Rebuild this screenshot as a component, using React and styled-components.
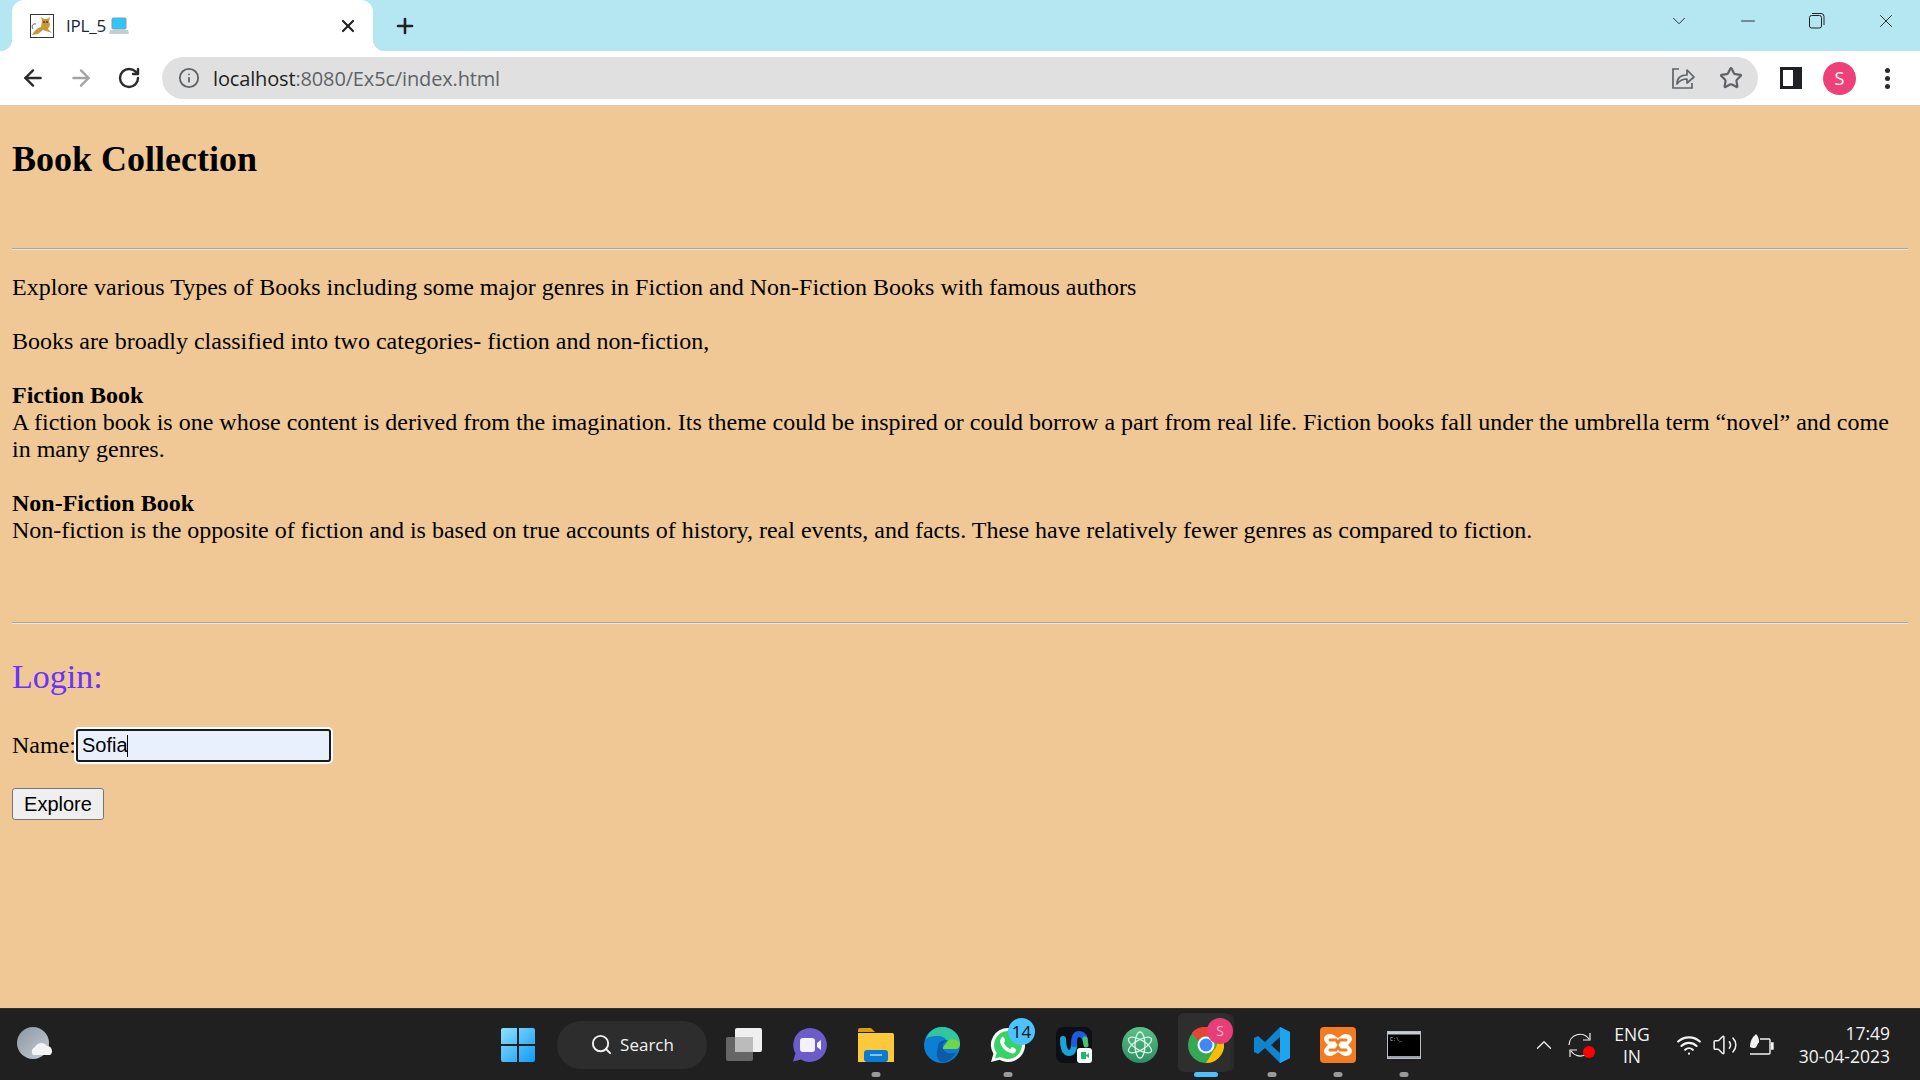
import React from 'react';
import styled, { createGlobalStyle } from 'styled-components';
import { ArrowLeft, ArrowRight, RotateCw, Info, Star, X, Plus, Minus, ChevronDown, ChevronUp, Search, Wifi, Volume2 } from 'lucide-react';

const GlobalStyle = createGlobalStyle`
  html, body {
    margin: 0;
    padding: 0;
    height: 100%;
    overflow: hidden;
  }
  #root {
    height: 100%;
  }
`;

const Screen = styled.div`
  height: 1080px;
  display: flex;
  flex-direction: column;
  background: #f0c896;
`;

/* ---- tab strip ---- */
const TabStrip = styled.div`
  height: 51px;
  flex: none;
  background: #b5e7f3;
  display: flex;
  align-items: flex-end;
  padding-left: 12px;
`;

const Tab = styled.div`
  position: relative;
  width: 361px;
  height: 51px;
  box-sizing: border-box;
  background: #fff;
  border-radius: 12px 12px 0 0;
  display: flex;
  align-items: center;
  padding: 0 15px 0 18px;

  &::before,
  &::after {
    content: '';
    position: absolute;
    bottom: 0;
    width: 12px;
    height: 12px;
  }
  &::before {
    left: -12px;
    background: radial-gradient(circle at 0 0, transparent 12px, #fff 12.5px);
  }
  &::after {
    right: -12px;
    background: radial-gradient(circle at 100% 0, transparent 12px, #fff 12.5px);
  }
`;

const Favicon = styled.svg`
  width: 24px;
  height: 24px;
  flex: none;
  margin-right: 12px;
`;

const TabTitle = styled.span`
  font: 17px 'Open Sans', sans-serif;
  color: #16243c;
  letter-spacing: -0.2px;
`;

const TabClose = styled.span`
  margin-left: auto;
  display: flex;
  color: #222;
`;

const NewTab = styled.span`
  display: flex;
  align-self: center;
  margin-left: 20px;
  color: #222;
`;

const WindowControls = styled.div`
  margin-left: auto;
  align-self: flex-start;
  display: flex;
  height: 42px;
  align-items: center;
`;

const WindowButton = styled.span`
  width: 69px;
  display: flex;
  justify-content: center;
  color: #222;
`;

/* ---- address bar ---- */
const Toolbar = styled.div`
  height: 54px;
  flex: none;
  background: #fff;
  border-bottom: 1px solid #cfcfcf;
  display: flex;
  align-items: center;
  padding-left: 9px;
`;

const NavButton = styled.span`
  width: 48px;
  display: flex;
  justify-content: center;
  color: ${(p) => (p.$off ? '#a3a3a3' : '#2b2b2b')};
`;

const Omnibox = styled.div`
  width: 1596px;
  height: 42px;
  margin-left: 9px;
  background: #e0e0e0;
  border-radius: 21px;
  display: flex;
  align-items: center;
  padding: 0 15px 0 16px;
  box-sizing: border-box;
  color: #5f6368;
`;

const UrlText = styled.span`
  margin-left: 13px;
  font: 20px 'Open Sans', sans-serif;
  letter-spacing: -0.15px;
  color: #5f6368;
  b {
    font-weight: 400;
    color: #1f1f1f;
  }
`;

const BoxActions = styled.div`
  margin-left: auto;
  display: flex;
  gap: 24px;
  align-items: center;
  color: #5f6368;
`;

const ToolIcons = styled.div`
  display: flex;
  align-items: center;
  margin-left: 22px;
  gap: 21px;
`;

const Avatar = styled.span`
  width: 33px;
  height: 33px;
  border-radius: 50%;
  background: #ee4079;
  color: #fff;
  font: 18px 'Open Sans', sans-serif;
  display: flex;
  align-items: center;
  justify-content: center;
`;

const Dots = styled.span`
  display: flex;
  flex-direction: column;
  gap: 3px;
  margin-left: 8px;
  i {
    width: 5px;
    height: 5px;
    border-radius: 50%;
    background: #2b2b2b;
  }
`;

/* ---- page ---- */
const Page = styled.main`
  flex: 1;
  min-height: 0;
  padding: 0 12px;
  background: #f0c896;
  color: #000;
  font: 24px/27px 'Liberation Serif', 'Times New Roman', serif;
`;

const Title = styled.h1`
  margin: 32px 0 69px;
  font-size: 36px;
  line-height: 42px;
  font-weight: 700;
  margin-bottom: 68px;
`;

const Rule = styled.hr`
  margin: 0;
  height: 0;
  border: 0;
  border-top: 1px solid #a3a7ab;
  border-bottom: 1px solid #f4e6d4;
`;

const Para = styled.p`
  margin: 0 0 27px;
  &:first-of-type {
    margin-top: 24px;
  }
  &:last-of-type {
    margin-bottom: 78px;
  }
`;

const Login = styled.h3`
  margin: 34px 0 32px;
  font-size: 34px;
  line-height: 38px;
  font-weight: 400;
  color: #6633ff;
`;

const NameRow = styled.label`
  display: flex;
  align-items: center;
`;

const InputWrap = styled.span`
  position: relative;
  display: flex;
  margin-left: -1px;
`;

const NameInput = styled.input`
  width: 257px;
  height: 35px;
  box-sizing: border-box;
  padding: 0 4px;
  border: 3px solid #1a1a1a;
  border-radius: 4px;
  outline: 2px solid #fff;
  outline-offset: -1px;
  background: #e8f0fe;
  font: 20px 'Liberation Sans', Arial, sans-serif;
  color: #000;
`;

const Caret = styled.i`
  position: absolute;
  left: 52px;
  top: 7px;
  width: 1px;
  height: 22px;
  background: #000;
`;

const Submit = styled.button`
  display: block;
  width: 92px;
  height: 32px;
  margin-top: 25px;
  padding: 0;
  box-sizing: border-box;
  background: #efefef;
  border: 1px solid #767676;
  border-radius: 3px;
  font: 20px 'Liberation Sans', Arial, sans-serif;
  color: #000;
`;

/* ---- taskbar ---- */
const Taskbar = styled.footer`
  height: 71px;
  flex: none;
  background: #202020;
  border-top: 1px solid #2c332c;
  display: flex;
  align-items: center;
`;

const Weather = styled.svg`
  width: 36px;
  height: 36px;
  margin-left: 17px;
  flex: none;
`;

const Center = styled.div`
  margin-left: 432px;
  display: flex;
  align-items: center;
  height: 100%;
`;

const AppSlot = styled.span`
  position: relative;
  width: 66px;
  height: 100%;
  display: flex;
  align-items: center;
  justify-content: center;
  flex: none;
  ${(p) =>
    p.$active &&
    `
    &::before {
      content: '';
      position: absolute;
      left: 5px;
      top: 4px;
      width: 52px;
      height: 59px;
      background: #2e2e2e;
      border-radius: 6px;
      box-shadow: 5px 0 0 -1px #2a2a2a;
    }
    & > svg { position: relative; }
  `}
`;

const RunDot = styled.i`
  position: absolute;
  bottom: 3px;
  left: 50%;
  transform: translateX(-50%);
  width: ${(p) => (p.$active ? 24 : 9)}px;
  height: 5px;
  border-radius: 3px;
  background: ${(p) => (p.$active ? '#4cc2ff' : '#9a9a9a')};
`;

const CountBadge = styled.span`
  position: absolute;
  top: 9px;
  right: 6px;
  width: 27px;
  height: 27px;
  border-radius: 50%;
  background: #4cc2ff;
  color: #111;
  font: 17px/27px 'Open Sans', sans-serif;
  text-align: center;
`;

const ProfileBadge = styled.span`
  position: absolute;
  top: 9px;
  right: 6px;
  width: 26px;
  height: 26px;
  border-radius: 50%;
  background: #e83e78;
  color: #f7b6cc;
  font: 14px/26px 'Open Sans', sans-serif;
  text-align: center;
`;

const SearchPill = styled.div`
  width: 150px;
  height: 48px;
  margin-left: 6px;
  margin-right: 4px;
  border-radius: 24px;
  background: #2d2d2d;
  color: #f2f2f2;
  display: flex;
  align-items: center;
  justify-content: center;
  gap: 7px;
  font: 17px 'Open Sans', sans-serif;
  flex: none;
`;

const Tray = styled.div`
  margin-left: auto;
  display: flex;
  align-items: center;
  color: #f2f2f2;
  height: 100%;
`;

const TrayIcon = styled.span`
  position: relative;
  display: flex;
  justify-content: center;
  width: 36px;
`;

const RedDot = styled.i`
  position: absolute;
  right: 3px;
  bottom: 0;
  width: 12px;
  height: 12px;
  border-radius: 50%;
  background: #f00;
`;

const Lang = styled.div`
  width: 60px;
  margin: 0 9px 0 4px;
  text-align: center;
  font: 17.5px/22px 'Open Sans', sans-serif;
`;

const Clock = styled.div`
  width: 105px;
  margin: 0 30px 0 6px;
  text-align: right;
  font: 17.5px/23px 'Open Sans', sans-serif;
`;

const TomcatIcon = () => (
  <Favicon viewBox="0 0 24 24">
    <rect x="0.5" y="0.5" width="23" height="23" fill="#fff" stroke="#333" />
    <path d="M2 21c2-4 5-7 9-8l1-6-1-4 3 2h3l3-2-1 4 1 4-2 4 4 4-6-2-3-1-5 4z" fill="#c8983a" />
    <path d="M3 15c-2-3 0-6 3-5" fill="none" stroke="#666" />
    <circle cx="14" cy="8" r="1" fill="#5b3d10" />
    <circle cx="17" cy="8" r="1" fill="#5b3d10" />
  </Favicon>
);

const LaptopIcon = () => (
  <svg width="20" height="20" viewBox="0 0 20 20" style={{ marginLeft: 3 }}>
    <rect x="3" y="2" width="14" height="11" rx="1" fill="#2ec5fb" stroke="#8a9aa5" />
    <path d="M1 14h18l1 4H0z" fill="#c7ccd1" />
  </svg>
);

const ShareIcon = () => (
  <svg width="24" height="24" viewBox="0 0 24 24" fill="none" stroke="currentColor" strokeWidth="1.7">
    <path d="M8 3H2v19h19v-5" />
    <path d="M6 18c0-6 4-9 10-9V4l7 7-7 6v-4c-4 0-7 1-10 5z" strokeLinejoin="round" />
  </svg>
);

const SidePanelIcon = () => (
  <svg width="22" height="22" viewBox="0 0 22 22">
    <rect x="1.5" y="1.5" width="19" height="19" fill="none" stroke="#202124" strokeWidth="3" />
    <rect x="13" y="2" width="8" height="18" fill="#202124" />
  </svg>
);

const RestoreIcon = () => (
  <svg width="16" height="16" viewBox="0 0 16 16" fill="none" stroke="currentColor" strokeWidth="1">
    <rect x="0.5" y="2.5" width="12" height="12.5" rx="2" />
    <path d="M3 .5h9a3 3 0 0 1 3 3V12" />
  </svg>
);

const WinLogo = () => (
  <svg width="36" height="36" viewBox="0 0 36 36">
    <defs>
      <linearGradient id="win" x1="0" y1="0" x2="1" y2="1">
        <stop offset="0" stopColor="#8fe0ff" />
        <stop offset="1" stopColor="#0f9bf5" />
      </linearGradient>
    </defs>
    <path d="M1 3a2 2 0 0 1 2-2h14v16H1zM19 1h14a2 2 0 0 1 2 2v14H19zM1 19h16v16H3a2 2 0 0 1-2-2zM19 19h16v14a2 2 0 0 1-2 2H19z" fill="url(#win)" />
  </svg>
);

const TaskViewIcon = () => (
  <svg width="36" height="34" viewBox="0 0 36 34">
    <rect x="0" y="9" width="27" height="24" rx="2" fill="#666" />
    <rect x="9" y="0" width="27" height="24" rx="2" fill="#efefef" />
    <rect x="9" y="9" width="18" height="15" fill="#bbb" />
  </svg>
);

const ChatIcon = () => (
  <svg width="36" height="36" viewBox="0 0 36 36">
    <path d="M18 1a17 17 0 1 1-9 31.5L1 34.5l2.5-8A17 17 0 0 1 18 1z" fill="#6b5cc9" />
    <rect x="8" y="11" width="15" height="14" rx="3" fill="#f4f2ff" />
    <path d="M25 16l4-3v10l-4-3z" fill="#f4f2ff" />
  </svg>
);

const FolderIcon = () => (
  <svg width="36" height="34" viewBox="0 0 36 34">
    <path d="M0 2a2 2 0 0 1 2-2h11l4 4h-17z" fill="#d99e10" />
    <path d="M0 5h34a2 2 0 0 1 2 2v27H0z" fill="#fdc83c" />
    <rect x="6" y="22" width="24" height="12" rx="3" fill="#0b7bd0" />
    <rect x="12" y="26" width="12" height="2" fill="#7cc4f5" />
  </svg>
);

const EdgeIcon = () => (
  <svg width="36" height="36" viewBox="0 0 36 36">
    <circle cx="18" cy="18" r="18" fill="#0c7fd2" />
    <path d="M2 12C5 4 11 0 18 0c10 0 18 7 18 16 0 3-1 5-4 6H19c0-4 4-5 4-8-1-3-5-5-9-5S5 9 2 12z" fill="#2fc6a0" />
    <path d="M36 16c0 3-1 6-4 6H19c0-4 4-5 4-8 5-3 10-2 13 2z" fill="#6fd64a" />
    <path d="M14 20c0-5 5-8 11-6-6 0-7 4-6 8 1 3 7 6 13 3-3 7-9 11-15 10-5-3-5-10-3-15z" fill="#0c5aa8" />
  </svg>
);

const WhatsappIcon = () => (
  <svg width="36" height="36" viewBox="0 0 36 36">
    <path d="M18 1a17 17 0 1 1-8.5 31.7L1 35l2.4-8.3A17 17 0 0 1 18 1z" fill="#fff" />
    <path d="M18 4a14 14 0 1 1-7.3 26L5 31.5l1.6-5.6A14 14 0 0 1 18 4z" fill="#37d366" />
    <path d="M12 10c2-1 3 3 3 4s-1 1-1 2c1 3 4 5 6 6 1 0 1-2 2-2s4 2 4 3c0 3-3 4-5 3-5-1-10-6-11-11 0-2 1-4 2-5z" fill="#fff" />
  </svg>
);

const WebexIcon = () => (
  <svg width="36" height="36" viewBox="0 0 36 36">
    <rect width="36" height="36" rx="7" fill="#0e0f12" />
    <path d="M7 12c0 8 2 14 6 14s5-4 5-9" fill="none" stroke="#1aa3d9" strokeWidth="6" strokeLinecap="round" />
    <path d="M18 17c0-6 1-10 5-10 3 0 5 2 6 5" fill="none" stroke="#1d5be0" strokeWidth="6" strokeLinecap="round" />
    <path d="M29 12l1 6" fill="none" stroke="#4cc46c" strokeWidth="5" strokeLinecap="round" />
    <rect x="21" y="21" width="15" height="15" rx="3" fill="#fff" />
    <path d="M25 25h5v7h-5zM30 28l3-2v5l-3-2z" fill="#22b573" />
  </svg>
);

const AtomIcon = () => (
  <svg width="36" height="36" viewBox="0 0 36 36" fill="none" stroke="#d9f5e3" strokeWidth="1.3">
    <defs>
      <linearGradient id="atom" x1="0" y1="0" x2="0" y2="1">
        <stop offset="0" stopColor="#5cc08a" />
        <stop offset="1" stopColor="#2a8f62" />
      </linearGradient>
    </defs>
    <circle cx="18" cy="18" r="18" fill="url(#atom)" stroke="none" />
    <ellipse cx="18" cy="18" rx="13" ry="5" transform="rotate(30 18 18)" />
    <ellipse cx="18" cy="18" rx="13" ry="5" transform="rotate(-30 18 18)" />
    <ellipse cx="18" cy="18" rx="13" ry="5" transform="rotate(90 18 18)" />
  </svg>
);

const ChromeIcon = () => (
  <svg width="36" height="36" viewBox="0 0 36 36">
    <circle cx="18" cy="18" r="18" fill="#34a853" />
    <path d="M18 0a18 18 0 0 1 15.6 9H18a9 9 0 0 0-8 5L4 5.5A18 18 0 0 1 18 0z" fill="#ea4335" />
    <path d="M33.6 9A18 18 0 0 1 18 36l8-13a9 9 0 0 0-1-14z" fill="#fbbc04" />
    <circle cx="18" cy="18" r="8.5" fill="#fff" />
    <circle cx="18" cy="18" r="6.5" fill="#4285f4" />
  </svg>
);

const VscodeIcon = () => (
  <svg width="36" height="36" viewBox="0 0 36 36">
    <path d="M26 0l10 5v26l-10 5L11 21l-7 6-4-2V11l4-2 7 6zM26 10l-9 8 9 8z" fill="#0f84d0" />
    <path d="M26 0l10 5v26l-10 5z" fill="#1fa4f0" />
  </svg>
);

const XamppIcon = () => (
  <svg width="36" height="36" viewBox="0 0 36 36">
    <rect width="36" height="36" rx="4" fill="#f47b20" />
    <path d="M10 7c-4 0-6 3-6 5s2 4 4 6c-2 2-4 4-4 6s2 5 6 5c3 0 5-2 8-4 3 2 5 4 8 4 4 0 6-3 6-5s-2-4-4-6c2-2 4-4 4-6s-2-5-6-5c-3 0-5 2-8 4-3-2-5-4-8-4z" fill="#fff" />
    <path d="M10 13h6l2 3 2-3h6M10 23h6l2-3 2 3h6" fill="none" stroke="#f47b20" strokeWidth="3" strokeLinecap="round" />
  </svg>
);

const TerminalIcon = () => (
  <svg width="34" height="28" viewBox="0 0 34 28">
    <rect x="0.5" y="0.5" width="33" height="27" fill="#000" stroke="#b8bcc4" />
    <rect x="1" y="1" width="32" height="2.5" fill="#c9ccd2" />
    <text x="3" y="10" fontSize="5" fill="#ddd" fontFamily="Liberation Mono">C:\_</text>
    <rect x="1" y="25" width="32" height="2" fill="#9aa0a8" />
  </svg>
);

const WeatherIcon = () => (
  <Weather viewBox="0 0 36 36">
    <defs>
      <linearGradient id="moon" x1="0" y1="0" x2="1" y2="1">
        <stop offset="0" stopColor="#8b96a1" />
        <stop offset="1" stopColor="#c6ced6" />
      </linearGradient>
    </defs>
    <circle cx="16" cy="16" r="16" fill="url(#moon)" />
    <path d="M16 28a5 5 0 0 1 2-8 7 7 0 0 1 12-1 5 5 0 0 1 3 9z" fill="#f1f3f5" />
  </Weather>
);

const SyncIcon = () => (
  <svg width="24" height="26" viewBox="0 0 24 26" fill="none" stroke="currentColor" strokeWidth="1.2">
    <path d="M1 13A11 11 0 0 1 21 7" />
    <path d="M22 1v7h-7" />
    <path d="M17 23A11 11 0 0 1 3 19" />
    <path d="M2 25v-7h7" />
  </svg>
);

const BatteryIcon = () => (
  <svg width="26" height="24" viewBox="0 0 26 24" fill="none" stroke="currentColor" strokeWidth="1.4">
    <path d="M12 6h9a1 1 0 0 1 1 1v13a1 1 0 0 1-1 1H2" />
    <path d="M23 10h2v6h-2" fill="currentColor" />
    <path d="M2 14c0-7 3-10 6-13 3 3 4 8 2 12-2 2-5 3-8 1z" fill="currentColor" stroke="none" />
    <path d="M11 10l-5 10" stroke="#202020" />
  </svg>
);

const App = () => (
  <>
    <GlobalStyle />
    <Screen>
      <TabStrip>
        <Tab>
          <TomcatIcon />
          <TabTitle>IPL_5</TabTitle>
          <LaptopIcon />
          <TabClose><X size={20} strokeWidth={2.6} /></TabClose>
        </Tab>
        <NewTab><Plus size={24} strokeWidth={2.6} /></NewTab>
        <WindowControls>
          <WindowButton><ChevronDown size={22} strokeWidth={1} /></WindowButton>
          <WindowButton><Minus size={22} strokeWidth={1} /></WindowButton>
          <WindowButton><RestoreIcon /></WindowButton>
          <WindowButton><X size={22} strokeWidth={1} /></WindowButton>
        </WindowControls>
      </TabStrip>

      <Toolbar>
        <NavButton><ArrowLeft size={26} strokeWidth={2.2} /></NavButton>
        <NavButton $off><ArrowRight size={26} strokeWidth={2.2} /></NavButton>
        <NavButton><RotateCw size={24} strokeWidth={2.4} /></NavButton>
        <Omnibox>
          <Info size={22} strokeWidth={2} />
          <UrlText><b>localhost</b>:8080/Ex5c/index.html</UrlText>
          <BoxActions>
            <ShareIcon />
            <Star size={24} strokeWidth={2.2} />
          </BoxActions>
        </Omnibox>
        <ToolIcons>
          <SidePanelIcon />
          <Avatar>S</Avatar>
          <Dots><i /><i /><i /></Dots>
        </ToolIcons>
      </Toolbar>

      <Page>
        <Title>Book Collection</Title>
        <Rule />
        <Para>Explore various Types of Books including some major genres in Fiction and Non-Fiction Books with famous authors</Para>
        <Para>Books are broadly classified into two categories- fiction and non-fiction,</Para>
        <Para>
          <b>Fiction Book</b>
          <br />
          A fiction book is one whose content is derived from the imagination. Its theme could be inspired or could borrow a part from real life. Fiction books fall under the umbrella term “novel” and come in many genres.
        </Para>
        <Para>
          <b>Non-Fiction Book</b>
          <br />
          Non-fiction is the opposite of fiction and is based on true accounts of history, real events, and facts. These have relatively fewer genres as compared to fiction.
        </Para>
        <Rule />
        <Login>Login:</Login>
        <NameRow>
          Name:
          <InputWrap>
            <NameInput defaultValue="Sofia" />
            <Caret />
          </InputWrap>
        </NameRow>
        <Submit type="button">Explore</Submit>
      </Page>

      <Taskbar>
        <WeatherIcon />
        <Center>
          <AppSlot><WinLogo /></AppSlot>
          <SearchPill><Search size={23} strokeWidth={2} />Search</SearchPill>
          <AppSlot><TaskViewIcon /></AppSlot>
          <AppSlot><ChatIcon /></AppSlot>
          <AppSlot><FolderIcon /><RunDot /></AppSlot>
          <AppSlot><EdgeIcon /></AppSlot>
          <AppSlot><WhatsappIcon /><CountBadge>14</CountBadge><RunDot /></AppSlot>
          <AppSlot><WebexIcon /></AppSlot>
          <AppSlot><AtomIcon /></AppSlot>
          <AppSlot $active><ChromeIcon /><ProfileBadge>S</ProfileBadge><RunDot $active /></AppSlot>
          <AppSlot><VscodeIcon /><RunDot /></AppSlot>
          <AppSlot><XamppIcon /><RunDot /></AppSlot>
          <AppSlot><TerminalIcon /><RunDot /></AppSlot>
        </Center>
        <Tray>
          <TrayIcon><ChevronUp size={26} strokeWidth={1.2} /></TrayIcon>
          <TrayIcon><SyncIcon /><RedDot /></TrayIcon>
          <Lang>ENG<br />IN</Lang>
          <TrayIcon><Wifi size={26} strokeWidth={2} /></TrayIcon>
          <TrayIcon><Volume2 size={26} strokeWidth={1.4} /></TrayIcon>
          <TrayIcon><BatteryIcon /></TrayIcon>
          <Clock>17:49<br />30-04-2023</Clock>
        </Tray>
      </Taskbar>
    </Screen>
  </>
);

export default App;
